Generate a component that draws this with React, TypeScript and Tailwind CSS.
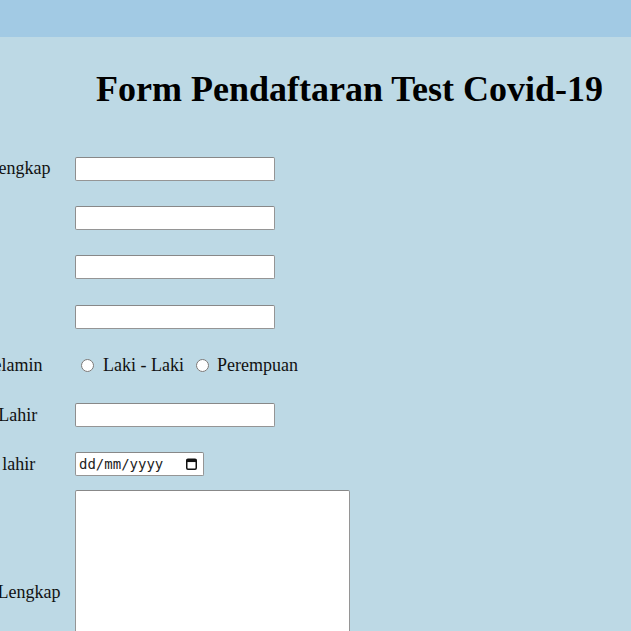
import { useState } from "react";

const serif = { fontFamily: '"Liberation Serif", "Times New Roman", serif' };

const Field = ({ label, children }: { label: string; children: React.ReactNode }) => (
  <>
    <div className="flex items-center h-[49.3px] text-[18px] text-[#111]">{label}</div>
    <div className="flex items-center h-[49.3px]">{children}</div>
  </>
);

const TextInput = () => (
  <input
    type="text"
    className="w-[200px] h-[24px] bg-white border border-[#959595] border-t-[#888] border-l-[#8e8e8e] rounded-[2px] px-[3px] text-[14px] outline-none"
  />
);

const App = () => {
  const [gender, setGender] = useState("");

  return (
    <div className="min-h-[631px] w-full overflow-hidden bg-[#bdd9e5]" style={serif}>
      <div className="h-[37px] bg-[#a2cae4]"></div>

      <h1 className="mt-[34px] pl-[96px] text-[36px] leading-[36px] font-bold text-black whitespace-nowrap">
        Form Pendaftaran Test Covid-19
      </h1>

      <form className="mt-[37px] ml-[-60px] grid grid-cols-[135px_auto] w-max">
        <Field label="Nama Lengkap">
          <TextInput />
        </Field>
        <Field label="NIK">
          <TextInput />
        </Field>
        <Field label="Email">
          <TextInput />
        </Field>
        <Field label="Umur">
          <TextInput />
        </Field>
        <Field label="Jenis Kelamin">
          <label className="flex items-center text-[18px] text-[#111] whitespace-nowrap">
            <input
              type="radio"
              name="jk"
              checked={gender === "L"}
              onChange={() => setGender("L")}
              className="ml-[6px] mr-[9px] w-[13px] h-[13px]"
            />
            Laki - Laki
          </label>
          <label className="flex items-center text-[18px] text-[#111] whitespace-nowrap">
            <input
              type="radio"
              name="jk"
              checked={gender === "P"}
              onChange={() => setGender("P")}
              className="ml-[12px] mr-[8px] w-[13px] h-[13px]"
            />
            Perempuan
          </label>
        </Field>
        <Field label="Tempat Lahir">
          <TextInput />
        </Field>
        <Field label="Tanggal lahir">
          <div className="relative w-[129px] h-[24px]">
            <input
              type="text"
              placeholder="dd/mm/yyyy"
              className="w-full h-full bg-white border border-[#959595] border-t-[#888] rounded-[2px] pl-[3px] pr-[24px] text-[14px] text-[#222] placeholder:text-[#222] outline-none"
              style={{ fontFamily: '"DejaVu Sans Mono", "Liberation Mono", monospace' }}
            />
            <svg
              className="absolute right-[7px] top-[6px]"
              width="11"
              height="12"
              viewBox="0 0 11 12"
            >
              <rect x="0.75" y="1.25" width="9.5" height="10" rx="1.2" fill="none" stroke="#111" strokeWidth="1.5" />
              <rect x="0.75" y="1.25" width="9.5" height="2.8" fill="#111" />
            </svg>
          </div>
        </Field>
        <div className="flex items-center pt-[1px] text-[18px] text-[#111]">Alamat Lengkap</div>
        <div className="flex items-start pt-[1px]">
          <textarea className="w-[275px] h-[205px] bg-white border border-[#959595] border-t-[#888] rounded-[2px] resize-none outline-none"></textarea>
        </div>
      </form>
    </div>
  );
};

export default App;
